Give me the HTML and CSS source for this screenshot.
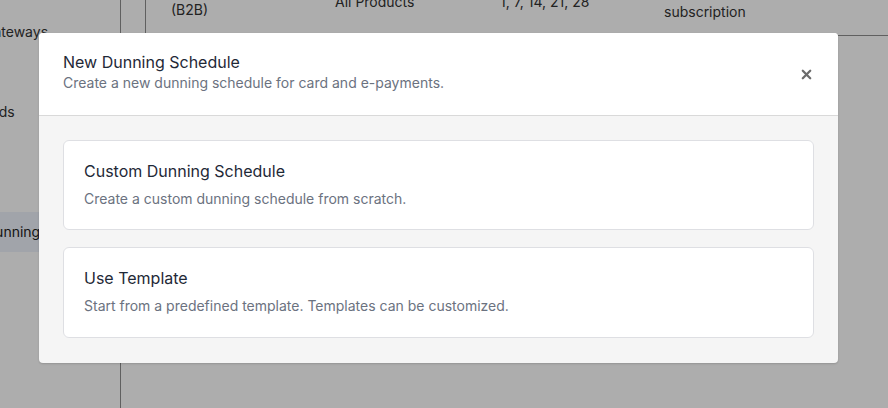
FILE: index.html
```html
<!DOCTYPE html>
<html>
<head>
<meta charset="utf-8">
<link rel="stylesheet" href="styles.css">
</head>
<body>
<div class="app">
  <aside class="sidebar">
    <nav class="nav">
      <div class="nav-item i1">Gateways</div>
      <div class="nav-item i2">Payment Methods</div>
      <div class="nav-item i3 active">Dunning</div>
    </nav>
  </aside>
  <main class="main">
    <div class="table">
      <div class="row">
        <div class="cell c1">(B2B)</div>
        <div class="cell c2">All Products</div>
        <div class="cell c3">1, 7, 14, 21, 28</div>
        <div class="cell c4">subscription</div>
      </div>
    </div>
  </main>
</div>
<div class="overlay"></div>
<div class="modal">
  <div class="modal-header">
    <div>
      <div class="modal-title">New Dunning Schedule</div>
      <div class="modal-sub">Create a new dunning schedule for card and e-payments.</div>
    </div>
    <button class="close" aria-label="Close">
      <svg width="11" height="11" viewBox="0 0 11 11"><path d="M1.8 1.8 L9.2 9.2 M9.2 1.8 L1.8 9.2" stroke="#6b6b6b" stroke-width="2.3" stroke-linecap="round"/></svg>
    </button>
  </div>
  <div class="modal-body">
    <div class="option">
      <div class="option-title">Custom Dunning Schedule</div>
      <div class="option-desc">Create a custom dunning schedule from scratch.</div>
    </div>
    <div class="option">
      <div class="option-title">Use Template</div>
      <div class="option-desc">Start from a predefined template. Templates can be customized.</div>
    </div>
  </div>
</div>
</body>
</html>
```
FILE: styles.css
```css
* { box-sizing: border-box; }
html, body { margin: 0; padding: 0; }
body {
  width: 888px;
  height: 408px;
  overflow: hidden;
  font-family: Inter, "Noto Sans", sans-serif;
  background: #fff;
  position: relative;
}
.app {
  display: flex;
  height: 408px;
}
.sidebar {
  width: 121px;
  flex: none;
  border-right: 1px solid #8e8e8e;
  background: #fff;
  overflow: hidden;
}
.nav {
  margin-left: -17px;
  font-size: 14px;
  color: #333;
}
.nav-item {
  height: 40px;
  line-height: 40px;
  white-space: nowrap;
}
.i1 { margin-top: 12px; }
.i2 { margin-top: 40px; margin-left: -88px; }
.i3 { margin-top: 80px; padding-left: 2px; }
.active { background: #eef2fb; color: #222; }
.main {
  flex: 1;
  padding-left: 24px;
}
.table {
  border-left: 1px solid #8e8e8e;
  border-bottom: 1px solid #8e8e8e;
  height: 36px;
}
.row {
  position: relative;
  height: 35px;
  font-size: 14px;
  color: #333;
}
.cell { position: absolute; white-space: nowrap; }
.c1 { left: 25px; top: 1px; }
.c2 { left: 189px; top: -7px; }
.c3 { left: 354px; top: -7px; }
.c4 { left: 518px; top: 3px; }
.overlay {
  position: absolute;
  inset: 0;
  background: rgba(0, 0, 0, 0.32);
}
.modal {
  position: absolute;
  left: 39px;
  top: 33px;
  width: 799px;
  height: 330px;
  background: #f5f5f5;
  border-radius: 4px;
  overflow: hidden;
  box-shadow: 0 1px 2px rgba(0,0,0,0.15);
}
.modal-header {
  background: #fff;
  height: 83px;
  border-bottom: 1px solid #d9d9d9;
  padding: 18px 26px 0 24px;
  display: flex;
  justify-content: space-between;
  align-items: flex-start;
}
.modal-title {
  font-size: 16px;
  line-height: 22px;
  color: #1f2937;
}
.modal-sub {
  font-size: 14px;
  line-height: 18px;
  margin-top: 1px;
  color: #6b7280;
}
.close {
  border: 0;
  background: none;
  padding: 0;
  margin-top: 18px;
  width: 11px;
  height: 11px;
  display: flex;
}
.modal-body {
  padding: 24px 24px 0 24px;
  display: flex;
  flex-direction: column;
  gap: 17px;
}
.option {
  background: #fff;
  border: 1px solid #dedfe3;
  border-radius: 6px;
  height: 91px;
  padding: 19px 20px 0 20px;
}
.option:first-child { height: 90px; }
.option-title {
  font-size: 16px;
  line-height: 22px;
  color: #1f2937;
}
.option-desc {
  font-size: 14px;
  line-height: 18px;
  margin-top: 8px;
  color: #6b7280;
}
```
